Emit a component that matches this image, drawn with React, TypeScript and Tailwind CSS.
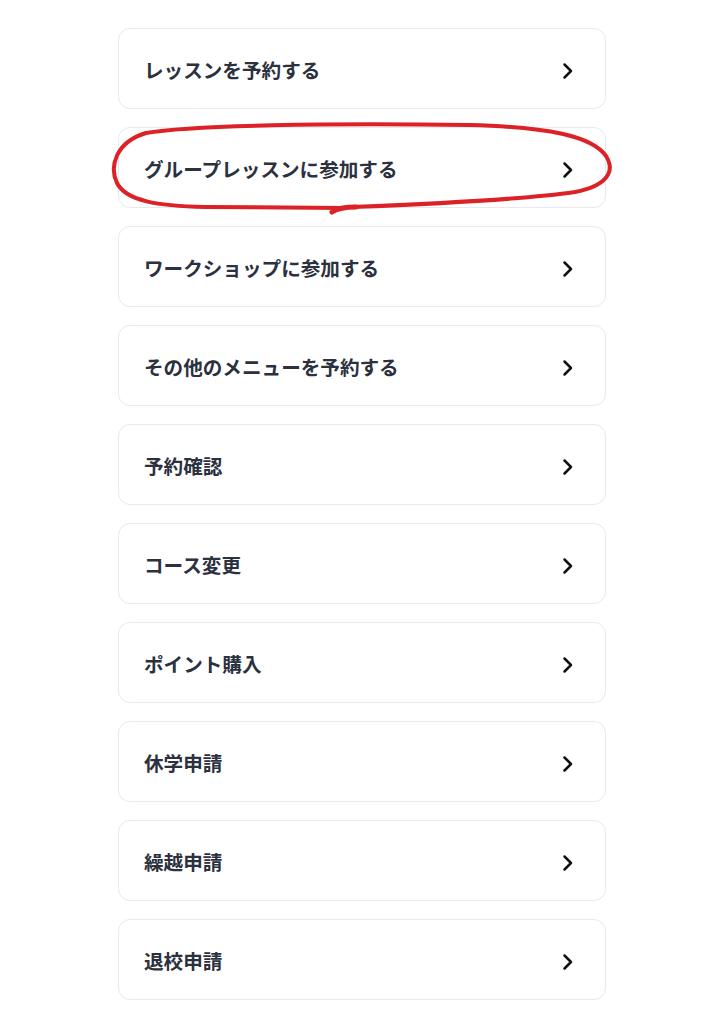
import React from 'react';

const menuItems = [
  'レッスンを予約する',
  'グループレッスンに参加する',
  'ワークショップに参加する',
  'その他のメニューを予約する',
  '予約確認',
  'コース変更',
  'ポイント購入',
  '休学申請',
  '繰越申請',
  '退校申請',
];

const Chevron = () => (
  <svg width="12" height="18" viewBox="0 0 12 18" fill="none" className="shrink-0 mt-[4px]">
    <path d="M2.5 2.5 L9 9 L2.5 15.5" stroke="#111" strokeWidth="2.5" strokeLinecap="round" strokeLinejoin="round" />
  </svg>
);

const App: React.FC = () => {
  return (
    <div
      className="relative w-[724px] h-[1024px] bg-white overflow-hidden"
      style={{ fontFamily: '"Noto Sans CJK JP", "Noto Sans", sans-serif' }}
    >
      <ul className="w-[488px] mx-auto pt-[28px] flex flex-col gap-[18px]">
        {menuItems.map((label) => (
          <li
            key={label}
            className="h-[81px] rounded-xl border border-[#e9e9ec] bg-white flex items-center justify-between pl-[25px] pr-[31px]"
          >
            <span className="text-[19.6px] font-bold text-[#2b313e] leading-none pt-[3px]">{label}</span>
            <Chevron />
          </li>
        ))}
      </ul>

      {/* Hand-drawn red annotation around the second item */}
      <svg
        className="absolute inset-0 pointer-events-none"
        width="724"
        height="1024"
        viewBox="0 0 724 1024"
        fill="none"
      >
        <path
          d="M345 208 L205 207 C158 206 126 201 117 183 C109 166 116 142 146 133 C190 125 330 123 470 125 C548 127 592 136 606 156 C616 172 606 186 575 192 C520 200 430 204 352 207"
          stroke="#dc2127"
          strokeWidth="4"
          strokeLinecap="round"
          strokeLinejoin="round"
        />
        <path
          d="M332 212 C338 208 346 207 356 207"
          stroke="#dc2127"
          strokeWidth="5"
          strokeLinecap="round"
        />
      </svg>
    </div>
  );
};

export default App;
